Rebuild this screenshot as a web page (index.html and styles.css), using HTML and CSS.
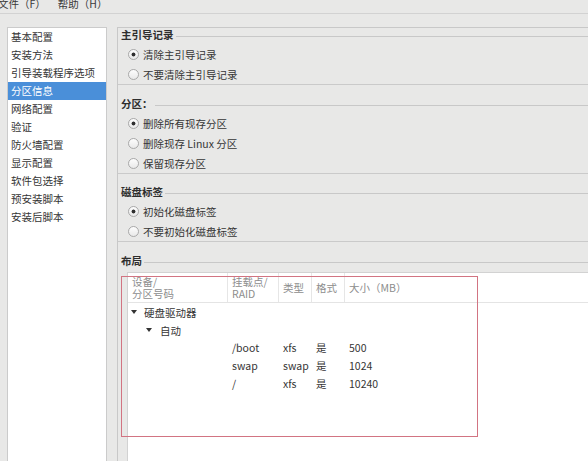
FILE: index.html
```html
<!DOCTYPE html>
<html lang="zh-CN">
<head>
<meta charset="utf-8">
<title>分区信息</title>
<link rel="stylesheet" href="styles.css">
</head>
<body>
<div class="menubar">
  <span class="menu">文件（F）</span>
  <span class="menu">帮助（H）</span>
</div>
<div class="main">
  <ul class="nav">
    <li>基本配置</li>
    <li>安装方法</li>
    <li>引导装载程序选项</li>
    <li class="active">分区信息</li>
    <li>网络配置</li>
    <li>验证</li>
    <li>防火墙配置</li>
    <li>显示配置</li>
    <li>软件包选择</li>
    <li>预安装脚本</li>
    <li>安装后脚本</li>
  </ul>
  <div class="panel">
    <section class="group first">
      <div class="legend"><span>主引导记录</span></div>
      <div class="opts">
        <label class="radio checked"><span class="dot"></span>清除主引导记录</label>
        <label class="radio"><span class="dot"></span>不要清除主引导记录</label>
      </div>
    </section>
    <section class="group">
      <div class="legend"><span>分区：</span></div>
      <div class="opts">
        <label class="radio checked"><span class="dot"></span>删除所有现存分区</label>
        <label class="radio"><span class="dot"></span>删除现存 Linux 分区</label>
        <label class="radio"><span class="dot"></span>保留现存分区</label>
      </div>
    </section>
    <section class="group">
      <div class="legend"><span>磁盘标签</span></div>
      <div class="opts">
        <label class="radio checked"><span class="dot"></span>初始化磁盘标签</label>
        <label class="radio"><span class="dot"></span>不要初始化磁盘标签</label>
      </div>
    </section>
    <section class="group layout">
      <div class="legend"><span>布局</span></div>
      <div class="tablewrap">
        <div class="thead">
          <div class="th">设备/<br>分区号码</div>
          <div class="th">挂载点/<br>RAID</div>
          <div class="th">类型</div>
          <div class="th">格式</div>
          <div class="th last">大小（MB）</div>
        </div>
        <div class="tree lvl1"><span class="arrow"></span>硬盘驱动器</div>
        <div class="tree lvl2"><span class="arrow"></span>自动</div>
        <div class="row"><span></span><span>/boot</span><span>xfs</span><span>是</span><span>500</span></div>
        <div class="row"><span></span><span>swap</span><span>swap</span><span>是</span><span>1024</span></div>
        <div class="row"><span></span><span>/</span><span>xfs</span><span>是</span><span>10240</span></div>
        <div class="annot"></div>
      </div>
    </section>
  </div>
</div>
</body>
</html>
```

FILE: styles.css
```css
html, body {
  margin: 0;
  height: 100%;
}

body {
  background: #e8e8e7;
  font-family: "Noto Sans CJK SC", "Noto Sans", sans-serif;
  font-size: 10.5px;
  color: #353535;
  display: flex;
  flex-direction: column;
  overflow: hidden;
}

.menubar {
  height: 13px;
  line-height: 8px;
  border-bottom: 1px solid #d2d2d2;
  display: flex;
  gap: 12px;
  margin-left: -2px;
  white-space: nowrap;
  overflow: hidden;
  color: #3a3a3a;
}

.main {
  flex: 1;
  display: flex;
  padding-top: 13px;
  min-height: 0;
}

.nav {
  margin: 0 0 0 7px;
  padding: 0;
  list-style: none;
  width: 100px;
  box-sizing: border-box;
  background: #fff;
  border: 1px solid #cbcbcb;
  border-bottom: none;
}

.nav li {
  height: 18px;
  line-height: 18px;
  padding-left: 3px;
  white-space: nowrap;
}

.nav li.active {
  background: #4a8fd9;
  color: #fff;
}

.panel {
  margin-left: 10px;
  flex: 1;
  border-top: 1px solid #c8c8c8;
  border-left: 1px solid #c8c8c8;
  display: flex;
  flex-direction: column;
  min-width: 0;
}

.group {
  border-bottom: 1px solid #cacaca;
  padding-top: 12px;
}

.group.first {
  padding-top: 0;
}

.group:nth-child(3) {
  padding-top: 11px;
}

.legend {
  display: flex;
  align-items: center;
  height: 14px;
  line-height: 14px;
  padding-left: 3px;
  font-weight: bold;
  color: #2e2e2e;
  white-space: nowrap;
}

.legend::after {
  content: "";
  flex: 1;
  height: 1px;
  margin: 2px 0 0 2px;
  background: #c8c8c8;
}

.opts {
  padding-top: 2px;
}

.radio {
  display: flex;
  align-items: center;
  height: 20px;
  padding-left: 10px;
  gap: 4px;
  white-space: nowrap;
}

.radio .dot {
  width: 11px;
  height: 11px;
  box-sizing: border-box;
  border-radius: 50%;
  border: 1px solid #a9a9a9;
  background: linear-gradient(#fdfdfd, #e9e9e9);
}

.radio.checked .dot {
  background: radial-gradient(circle, #2f2f2f 0 1.6px, transparent 2.3px), linear-gradient(#fdfdfd, #e9e9e9);
}

.group.layout {
  border-bottom: none;
  flex: 1;
  display: flex;
  flex-direction: column;
}

.group.layout .legend {
  margin-bottom: 4px;
}

.tablewrap {
  flex: 1;
  margin-left: 9px;
  background: #fff;
  border-top: 1px solid #d2d2d2;
  border-left: 1px solid #d2d2d2;
  position: relative;
}

.thead,
.row {
  display: grid;
  grid-template-columns: 100px 51px 33px 33px 1fr;
}

.thead {
  height: 29px;
  border-bottom: 1px solid #e4e4e4;
  color: #8d8d8d;
}

.th {
  display: flex;
  align-items: center;
  padding-left: 4px;
  line-height: 12px;
  border-right: 1px solid #e6e6e6;
  white-space: nowrap;
}

.th.last {
  border-right: none;
}

.tree {
  display: flex;
  align-items: center;
  height: 18px;
  white-space: nowrap;
}

.tree.lvl1 {
  padding-left: 3px;
  gap: 7px;
}

.tree.lvl2 {
  padding-left: 18px;
  gap: 8px;
}

.arrow {
  width: 0;
  height: 0;
  border-left: 3px solid transparent;
  border-right: 3px solid transparent;
  border-top: 4px solid #333;
}

.row {
  height: 18px;
  line-height: 18px;
  white-space: nowrap;
}

.row span {
  padding-left: 4px;
}

.annot {
  position: absolute;
  left: -7px;
  top: 3px;
  width: 357px;
  height: 161px;
  box-sizing: border-box;
  border: 1px solid #d27482;
}
```
